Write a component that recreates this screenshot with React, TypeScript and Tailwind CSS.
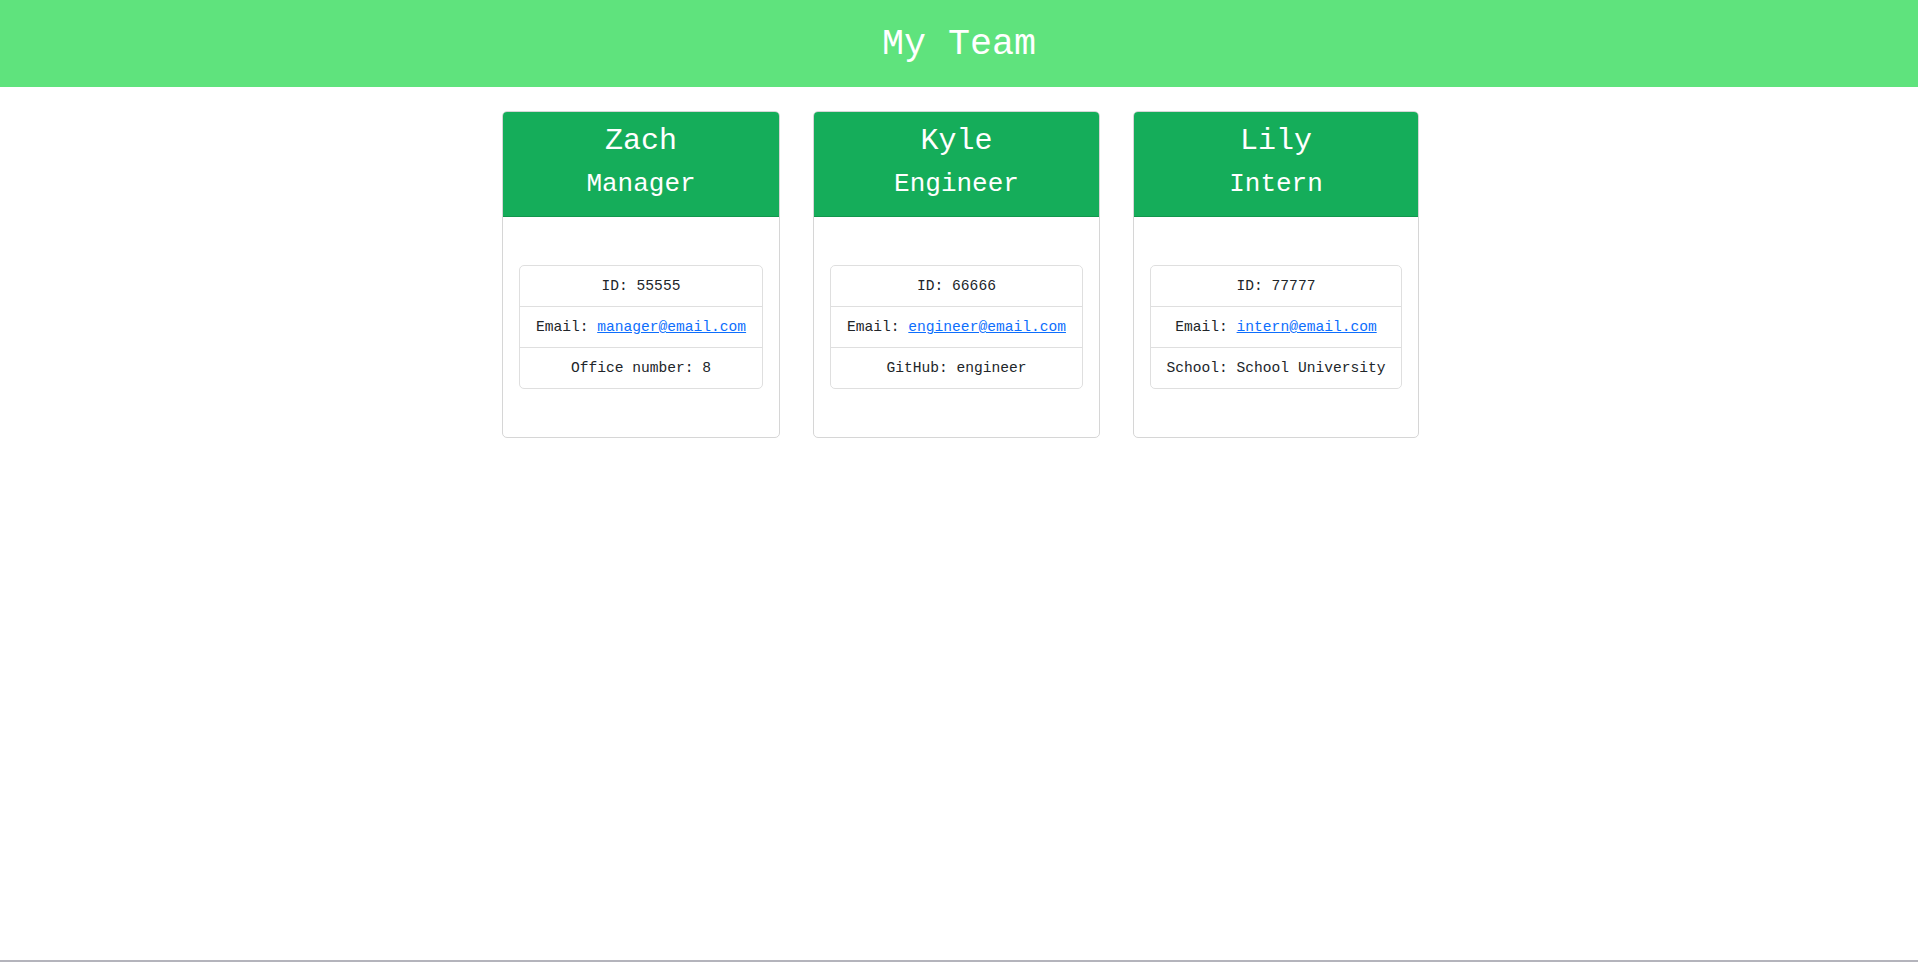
const team = [
  {
    name: "Zach",
    role: "Manager",
    id: "55555",
    email: "manager@email.com",
    extra: "Office number: 8",
    width: "w-[278px]",
  },
  {
    name: "Kyle",
    role: "Engineer",
    id: "66666",
    email: "engineer@email.com",
    extra: "GitHub: engineer",
    width: "w-[287px]",
  },
  {
    name: "Lily",
    role: "Intern",
    id: "77777",
    email: "intern@email.com",
    extra: "School: School University",
    width: "w-[286px]",
  },
];

const App = () => {
  return (
    <div className="h-screen bg-white border-b-2 border-[#b4b4bc] font-['Liberation_Mono',monospace] text-[#212529]">
      {/* Page Header */}
      <header className="h-[87px] bg-[#5fe37d] flex items-center justify-center">
        <h1 className="text-[36.7px] leading-none text-white pt-[1px]">My Team</h1>
      </header>

      {/* Team Cards */}
      <div className="flex items-start gap-[33px] pl-[502px] pt-[24px]">
        {team.map((member) => (
          <div
            key={member.id}
            className={`${member.width} shrink-0 border border-[#d6d6d6] rounded-[5px] overflow-hidden bg-white`}
          >
            <div className="bg-[#15ad5a] border-b border-[#11974d] text-white text-center pt-[11px] pb-[16px]">
              <h3 className="text-[30px] leading-[36px]">{member.name}</h3>
              <h4 className="text-[26px] leading-[31px] mt-[10px]">{member.role}</h4>
            </div>
            <div className="px-4 py-[48px]">
              <ul className="border border-[#dfdfdf] rounded-[5px] text-[14.6px] text-center whitespace-nowrap">
                <li className="leading-[24px] py-[8px]">ID: {member.id}</li>
                <li className="leading-[24px] py-[8px] border-t border-[#dfdfdf]">
                  Email:{" "}
                  <a href={`mailto:${member.email}`} className="text-[#0d6efd] underline">
                    {member.email}
                  </a>
                </li>
                <li className="leading-[24px] py-[8px] border-t border-[#dfdfdf]">{member.extra}</li>
              </ul>
            </div>
          </div>
        ))}
      </div>
    </div>
  );
};

export default App;
